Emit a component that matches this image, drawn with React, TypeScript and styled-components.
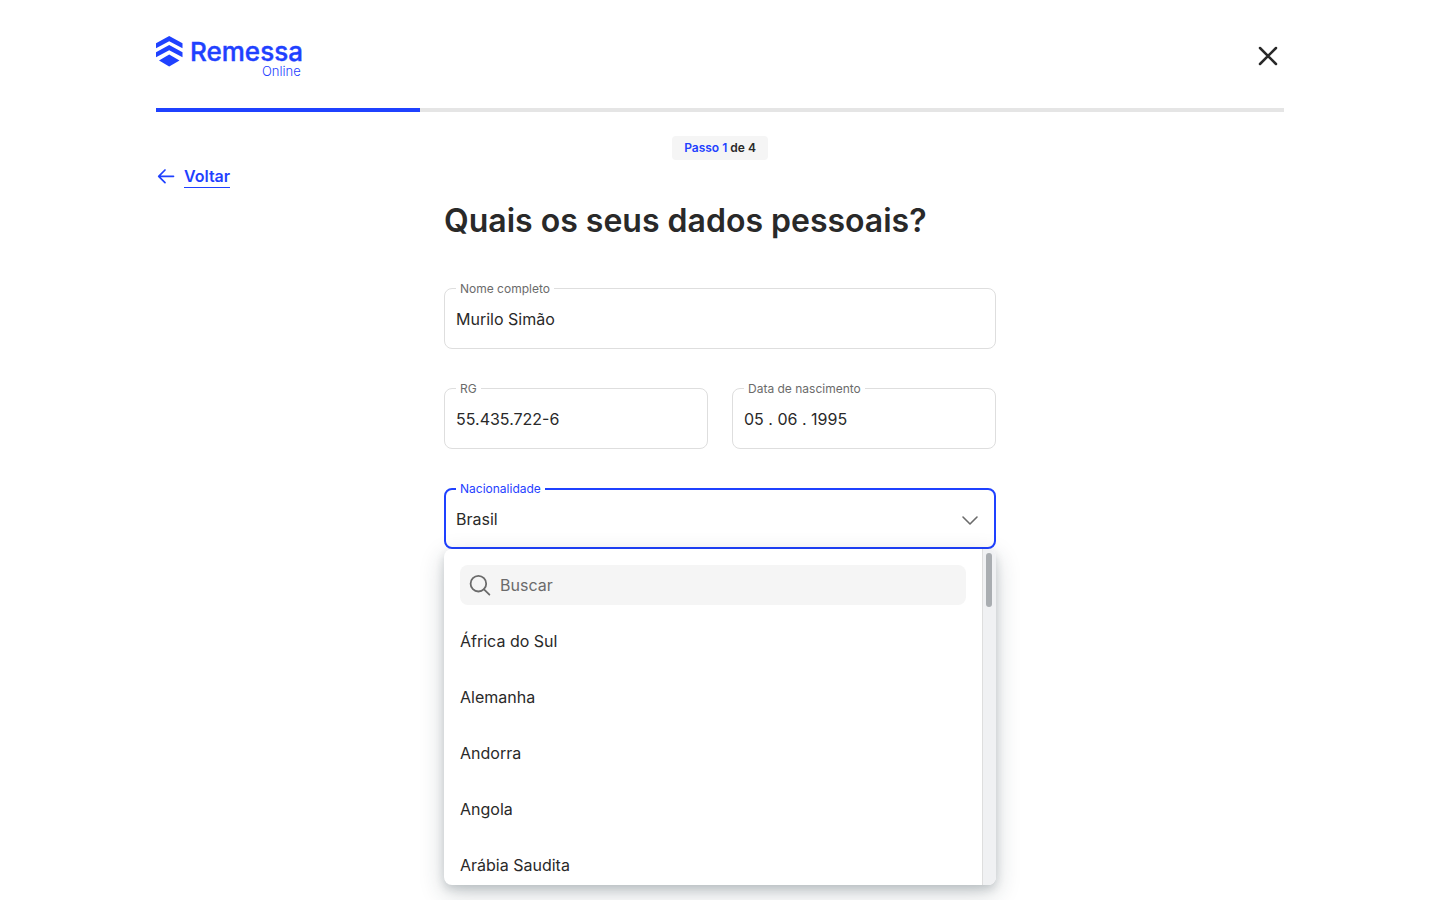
import React from 'react';
import styled, { createGlobalStyle } from 'styled-components';

const blue = '#1f41ff';
const ink = '#292929';
const muted = '#6b6b6b';

const GlobalStyle = createGlobalStyle`
  *, *::before, *::after { box-sizing: border-box; }
  body {
    margin: 0;
    background: #fff;
    color: ${ink};
    font-family: Inter, "Liberation Sans", sans-serif;
    font-size: 16px;
    line-height: 24px;
    -webkit-font-smoothing: antialiased;
  }
`;

const Page = styled.div`
  max-width: 1176px;
  min-height: 100vh;
  margin: 0 auto;
  padding: 0 24px;
`;

const Header = styled.header`
  display: flex;
  justify-content: space-between;
  align-items: center;
  height: 108px;
  padding-top: 4px;
`;

const LogoLink = styled.a`
  display: flex;
  color: ${blue};
`;

const IconButton = styled.button`
  display: flex;
  padding: 4px;
  border: 0;
  background: none;
  color: ${ink};
  cursor: pointer;
`;

const Progress = styled.div`
  height: 4px;
  background: #e5e5e5;
`;

const ProgressFill = styled.div`
  height: 100%;
  background: ${blue};
`;

const Content = styled.div`
  display: grid;
  grid-template-columns: 1fr minmax(0, 552px) 1fr;
  padding-top: 24px;
`;

const BackLink = styled.a`
  display: flex;
  align-items: center;
  justify-self: start;
  align-self: start;
  gap: 8px;
  margin-top: 28px;
  color: ${blue};
  font-weight: 600;
  text-decoration: none;
`;

const BackText = styled.span`
  padding-top: 2px;
  border-bottom: 1px solid ${blue};
  line-height: 21px;
`;

const Form = styled.form`
  display: flex;
  flex-direction: column;
`;

const Step = styled.p`
  align-self: center;
  margin: 0;
  padding: 0 12px;
  border-radius: 4px;
  background: #f5f5f5;
  font-size: 12px;
  font-weight: 600;
`;

const StepCurrent = styled.span`
  color: ${blue};
`;

const Title = styled.h1`
  margin: 40px 0 46px;
  font-size: 32px;
  font-weight: 600;
  line-height: 42px;
`;

const Fields = styled.div`
  display: grid;
  grid-template-columns: 1fr 1fr;
  gap: 39px 24px;
`;

const Field = styled.div<{ $wide?: boolean }>`
  position: relative;
  display: flex;
  grid-column: ${p => (p.$wide ? '1 / -1' : 'auto')};
`;

const Label = styled.label<{ $active?: boolean }>`
  position: absolute;
  z-index: 2;
  top: -8px;
  left: 12px;
  padding: 0 4px;
  background: #fff;
  color: ${p => (p.$active ? blue : muted)};
  font-size: 12px;
  line-height: 18px;
`;

const Input = styled.input`
  width: 100%;
  height: 61px;
  padding: 0 11px;
  border: 1px solid #dedede;
  border-radius: 8px;
  outline: 0;
  background: #fff;
  color: ${ink};
  font: inherit;
`;

const Select = styled.select`
  width: 100%;
  height: 61px;
  padding: 0 48px 0 10px;
  border: 2px solid ${blue};
  border-radius: 8px;
  outline: 0;
  appearance: none;
  background: #fff;
  color: ${ink};
  font: inherit;
`;

const Chevron = styled.svg`
  position: absolute;
  top: 20px;
  right: 14px;
  pointer-events: none;
`;

const Dropdown = styled.div`
  position: absolute;
  top: 100%;
  left: 0;
  right: 0;
  display: grid;
  grid-template-columns: 1fr 14px;
  height: 336px;
  overflow: hidden;
  border-radius: 8px;
  background: #fff;
  box-shadow: 0 8px 24px rgba(33, 48, 60, 0.22), 0 4px 8px rgba(33, 48, 60, 0.16);
`;

const DropdownBody = styled.div`
  padding: 16px 16px 0;
`;

const Search = styled.div`
  display: flex;
  align-items: center;
  gap: 8px;
  height: 40px;
  padding: 0 8px;
  border-radius: 8px;
  background: #f5f5f5;
`;

const SearchInput = styled.input`
  flex: 1;
  padding: 0;
  border: 0;
  outline: 0;
  background: none;
  color: ${ink};
  font: inherit;
  &::placeholder { color: ${muted}; opacity: 1; }
`;

const Options = styled.ul`
  margin: 8px 0 0;
  padding: 0;
  list-style: none;
`;

const Option = styled.li`
  padding: 16px 0;
  cursor: pointer;
`;

const Track = styled.div`
  padding: 4px 3px;
  border-left: 1px solid #dedede;
  background: #f0f1f3;
`;

const Thumb = styled.div`
  width: 6px;
  height: 54px;
  border-radius: 3px;
  background: #a9adb1;
`;

const countries = ['África do Sul', 'Alemanha', 'Andorra', 'Angola', 'Arábia Saudita'];

function Logo() {
  return (
    <svg width="148" height="44" viewBox="0 0 148 44" fill="currentColor" role="img" aria-label="Remessa Online">
      <path d="M0 9.2 13.2 2l13.3 7.2v5L13.2 7.2 0 14.2z" />
      <path d="M0 18.2 13.2 11l13.3 7.2v5L13.2 16.2 0 23.2z" />
      <path d="M3 26.5 13.2 20.6 23.5 26.5 13.2 32.4z" />
      <text x="34" y="27" fontFamily="Inter, sans-serif" fontSize="26" fontWeight="500" stroke="currentColor" strokeWidth="0.4">Remessa</text>
      <text x="106" y="42" fontFamily="Inter, sans-serif" fontSize="13" fontWeight="300">Online</text>
    </svg>
  );
}

export default function App() {
  return (
    <>
      <GlobalStyle />
      <Page>
        <Header>
          <LogoLink href="#"><Logo /></LogoLink>
          <IconButton type="button" aria-label="Fechar">
            <svg width="24" height="24" viewBox="0 0 24 24" fill="none" stroke="currentColor" strokeWidth="2.5" strokeLinecap="round">
              <path d="M4 4l16 16M20 4 4 20" />
            </svg>
          </IconButton>
        </Header>
        <Progress><ProgressFill style={{ width: `${(264 / 1128) * 100}%` }} /></Progress>
        <Content>
          <BackLink href="#">
            <svg width="20" height="20" viewBox="0 0 20 20" fill="none" stroke="currentColor" strokeWidth="1.7" strokeLinecap="round" strokeLinejoin="round">
              <path d="M17.5 10.3H3M9 4 2.7 10.3 9 16.6" />
            </svg>
            <BackText>Voltar</BackText>
          </BackLink>
          <Form>
            <Step><StepCurrent>Passo 1</StepCurrent> de 4</Step>
            <Title>Quais os seus dados pessoais?</Title>
            <Fields>
              <Field $wide>
                <Label htmlFor="nome">Nome completo</Label>
                <Input id="nome" defaultValue="Murilo Simão" />
              </Field>
              <Field>
                <Label htmlFor="rg">RG</Label>
                <Input id="rg" defaultValue="55.435.722-6" />
              </Field>
              <Field>
                <Label htmlFor="nascimento">Data de nascimento</Label>
                <Input id="nascimento" defaultValue="05 . 06 . 1995" />
              </Field>
              <Field $wide>
                <Label htmlFor="nacionalidade" $active>Nacionalidade</Label>
                <Select id="nacionalidade" defaultValue="Brasil">
                  <option>Brasil</option>
                </Select>
                <Chevron width="24" height="24" viewBox="0 0 24 24" fill="none" stroke={muted} strokeWidth="1.6" strokeLinecap="round" strokeLinejoin="round" aria-hidden="true">
                  <path d="M5 9l7 7 7-7" />
                </Chevron>
                <Dropdown>
                  <DropdownBody>
                    <Search>
                      <svg width="24" height="24" viewBox="0 0 24 24" fill="none" stroke={muted} strokeWidth="1.8" strokeLinecap="round" aria-hidden="true">
                        <circle cx="10.4" cy="10.7" r="7.8" />
                        <path d="M16 16.3 21.4 21.6" />
                      </svg>
                      <SearchInput type="text" placeholder="Buscar" aria-label="Buscar país" />
                    </Search>
                    <Options role="listbox" aria-label="Nacionalidade">
                      {countries.map(c => <Option key={c} role="option" aria-selected={false}>{c}</Option>)}
                    </Options>
                  </DropdownBody>
                  <Track><Thumb /></Track>
                </Dropdown>
              </Field>
            </Fields>
          </Form>
        </Content>
      </Page>
    </>
  );
}
